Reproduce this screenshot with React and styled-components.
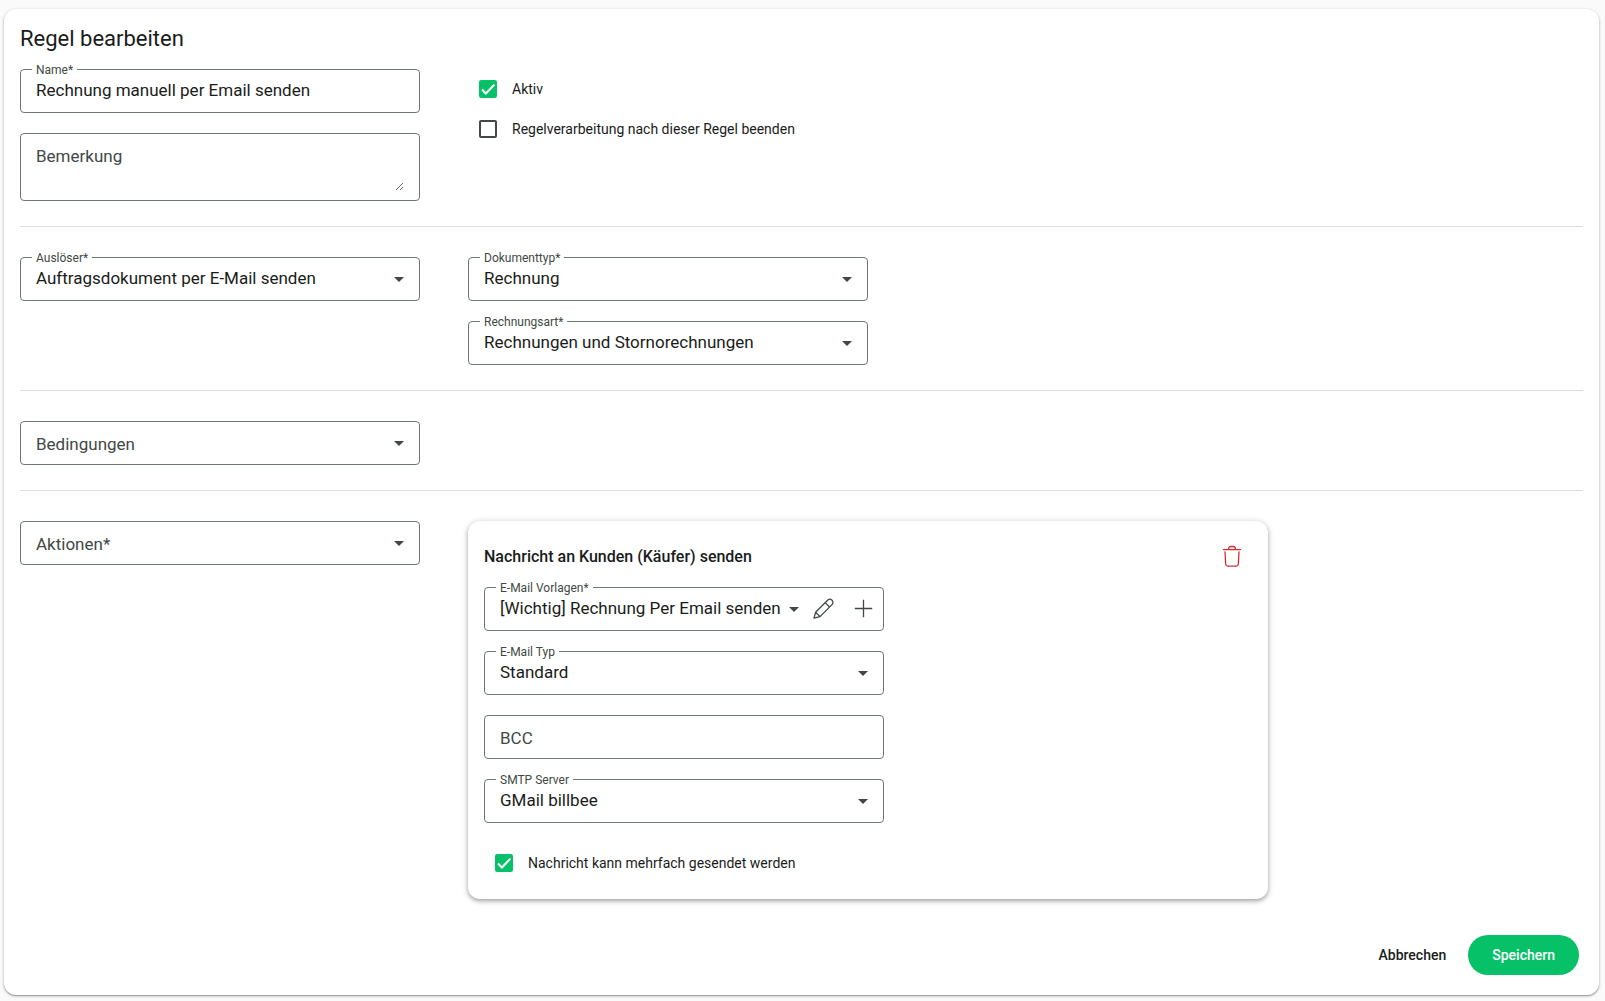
import React, { useState } from 'react';
import styled, { createGlobalStyle } from 'styled-components';

const App = () => {
    const [rule, setRule] = useState({
        name: 'Rechnung manuell per Email senden',
        note: '',
        active: true,
        stop: false,
        bcc: '',
        multiple: true,
    });
    const update = (key, value) => setRule({ ...rule, [key]: value });

    return (
        <>
            <GlobalStyle />
            <Page onSubmit={(e) => e.preventDefault()}>
                <Title>Regel bearbeiten</Title>
                <Section>
                    <Column>
                        <TextField id="name" label="Name*" value={rule.name} onChange={(v) => update('name', v)} />
                        <Field $tall>
                            <Label htmlFor="note" $floating={rule.note !== ''}>Bemerkung</Label>
                            <TextArea id="note" value={rule.note} onChange={(e) => update('note', e.target.value)} />
                        </Field>
                    </Column>
                    <div>
                        <CheckField label="Aktiv" checked={rule.active} onChange={(v) => update('active', v)} />
                        <CheckField
                            label="Regelverarbeitung nach dieser Regel beenden"
                            checked={rule.stop}
                            onChange={(v) => update('stop', v)}
                        />
                    </div>
                </Section>
                <Divider />
                <Section>
                    <SelectField id="trigger" label="Auslöser*" value="Auftragsdokument per E-Mail senden" />
                    <Column>
                        <SelectField id="doctype" label="Dokumenttyp*" value="Rechnung" />
                        <SelectField id="invoicetype" label="Rechnungsart*" value="Rechnungen und Stornorechnungen" />
                    </Column>
                </Section>
                <Divider />
                <Section>
                    <SelectField id="conditions" label="Bedingungen" />
                </Section>
                <Divider />
                <Section>
                    <SelectField id="actions" label="Aktionen*" />
                    <ActionCard>
                        <ActionHeader>
                            <ActionTitle>Nachricht an Kunden (Käufer) senden</ActionTitle>
                            <IconButton type="button" aria-label="Aktion löschen" $danger>
                                <TrashIcon />
                            </IconButton>
                        </ActionHeader>
                        <Column>
                            <SelectField id="template" label="E-Mail Vorlagen*" value="[Wichtig] Rechnung Per Email senden">
                                <IconButton type="button" aria-label="Vorlage bearbeiten">
                                    <PencilIcon />
                                </IconButton>
                                <IconButton type="button" aria-label="Vorlage hinzufügen">
                                    <PlusIcon />
                                </IconButton>
                            </SelectField>
                            <SelectField id="mailtype" label="E-Mail Typ" value="Standard" />
                            <TextField id="bcc" label="BCC" value={rule.bcc} onChange={(v) => update('bcc', v)} />
                            <SelectField id="smtp" label="SMTP Server" value="GMail billbee" />
                            <CheckField
                                label="Nachricht kann mehrfach gesendet werden"
                                checked={rule.multiple}
                                onChange={(v) => update('multiple', v)}
                            />
                        </Column>
                    </ActionCard>
                </Section>
                <Footer>
                    <Button type="button">Abbrechen</Button>
                    <Button type="submit" $primary>Speichern</Button>
                </Footer>
            </Page>
        </>
    );
};

const TextField = ({ id, label, value, onChange }) => (
    <Field>
        <Label htmlFor={id} $floating={value !== ''}>{label}</Label>
        <Input id={id} type="text" value={value} onChange={(e) => onChange(e.target.value)} />
    </Field>
);

const SelectField = ({ id, label, value = '', children }) => (
    <Field $actions={Boolean(children)}>
        <Label htmlFor={id} $floating={value !== ''}>{label}</Label>
        <Select id={id} defaultValue={value}>
            <option value={value}>{value}</option>
        </Select>
        <Arrow viewBox="0 0 10 5" aria-hidden="true" $actions={Boolean(children)}>
            <path d="M0 0h10L5 5z" />
        </Arrow>
        {children}
    </Field>
);

const CheckField = ({ label, checked, onChange }) => (
    <CheckLabel>
        <CheckMark>
            <Checkbox type="checkbox" checked={checked} onChange={(e) => onChange(e.target.checked)} />
            {checked && (
                <svg viewBox="0 0 24 24" width="18" height="18" aria-hidden="true">
                    <path d="M4 12.7 9.2 18 20.5 6.2" fill="none" stroke="#fff" strokeWidth="2.7" />
                </svg>
            )}
        </CheckMark>
        {label}
    </CheckLabel>
);

const TrashIcon = () => (
    <svg viewBox="0 1 20 22" width="20" height="22" fill="none" stroke="currentColor" strokeWidth="1.3" strokeLinecap="round">
        <path d="M1.5 4.7h17M6.5 4.5c0-2 1-3 2.4-3h2.2c1.4 0 2.4 1 2.4 3" />
        <path d="M3 7l.7 12.3c.1 1.2.8 1.9 1.9 1.9h8.8c1.1 0 1.8-.7 1.9-1.9L17 7" />
    </svg>
);

const PencilIcon = () => (
    <svg viewBox="0 0 22 22" width="22" height="22" fill="none" stroke="currentColor" strokeWidth="1.3" strokeLinejoin="round">
        <path d="M2 20.2 3.6 14.2 15.6 2.2a3.1 3.1 0 0 1 4.4 4.4L8 18.6z" />
        <path d="M13.2 4.6l4.4 4.4M3.6 14.2l4.4 4.4" />
    </svg>
);

const PlusIcon = () => (
    <svg viewBox="0 0 20 20" width="20" height="20" fill="none" stroke="currentColor" strokeWidth="1.3">
        <path d="M10.5.8v17.4M1.8 9.5h17.4" />
    </svg>
);

const GlobalStyle = createGlobalStyle`
    * {
        box-sizing: border-box;
    }
    body {
        margin: 0;
        background: #fafafa;
        color: #191c1a;
        font-family: Roboto, "Liberation Sans", sans-serif;
    }
    input, select, textarea, button {
        font-family: inherit;
    }
`;
const Page = styled.form`
    margin: 9px 6px 6px 4px;
    padding: 16px 16px 20px;
    background: #fff;
    border-radius: 12px;
    box-shadow: 0 1px 3px rgba(0, 0, 0, 0.3), 0 1px 1px rgba(0, 0, 0, 0.2);
`;
const Title = styled.h1`
    margin: 0 0 16px;
    font-size: 22px;
    line-height: 28px;
    font-weight: 400;
`;
const Section = styled.div`
    display: grid;
    grid-template-columns: 400px 1fr;
    column-gap: 48px;
    align-items: start;
`;
const Column = styled.div`
    display: flex;
    flex-direction: column;
    gap: 20px;
`;
const Divider = styled.hr`
    margin: 25px 0 30px;
    border: 0;
    border-top: 1px solid #dedede;
`;
const Field = styled.div`
    position: relative;
    display: flex;
    align-items: center;
    width: 100%;
    max-width: 400px;
    height: ${({ $tall }) => ($tall ? 68 : 44)}px;
    padding: ${({ $actions }) => ($actions ? '0 0 0 15px' : '0 15px')};
    border: 1px solid #6f7973;
    border-radius: 4px;
`;
const Label = styled.label`
    position: absolute;
    left: 11px;
    top: ${({ $floating }) => ($floating ? -8 : 10)}px;
    padding: 0 4px;
    background: #fff;
    color: #404943;
    font-size: ${({ $floating }) => ($floating ? 12 : 17)}px;
    line-height: ${({ $floating }) => ($floating ? 16 : 24)}px;
    pointer-events: none;
`;
const Input = styled.input`
    flex: 1;
    min-width: 0;
    height: 24px;
    padding: 0 0 2px;
    border: 0;
    outline: 0;
    background: transparent;
    color: inherit;
    font-size: 17px;
    line-height: 22px;
`;
const TextArea = styled(Input).attrs({ as: 'textarea' })`
    height: 48px;
    resize: vertical;
`;
const Select = styled(Input).attrs({ as: 'select' })`
    appearance: none;
`;
const Arrow = styled.svg`
    flex: none;
    width: 10px;
    height: 5px;
    margin-right: ${({ $actions }) => ($actions ? 4 : 0)}px;
    fill: #404943;
`;
const CheckLabel = styled.label`
    display: flex;
    align-items: center;
    gap: 15px;
    height: 40px;
    padding-left: 11px;
    font-size: 14px;
    line-height: 20px;
`;
const CheckMark = styled.span`
    display: grid;
    > * {
        grid-area: 1 / 1;
    }
    svg {
        pointer-events: none;
    }
`;
const Checkbox = styled.input`
    appearance: none;
    width: 18px;
    height: 18px;
    margin: 0;
    border: 2px solid #404943;
    border-radius: 2px;
    &:checked {
        border-color: #07c169;
        background: #07c169;
    }
`;
const ActionCard = styled.section`
    width: 100%;
    max-width: 800px;
    padding: 16px;
    border-radius: 12px;
    box-shadow: 0 2px 4px rgba(0, 0, 0, 0.3), 0 1px 8px rgba(0, 0, 0, 0.12);
`;
const ActionHeader = styled.div`
    display: flex;
    align-items: center;
    justify-content: space-between;
    margin-bottom: 10px;
`;
const ActionTitle = styled.h2`
    margin: 0;
    font-size: 16px;
    line-height: 24px;
    font-weight: 500;
`;
const IconButton = styled.button`
    display: flex;
    flex: none;
    align-items: center;
    justify-content: center;
    width: 40px;
    height: 40px;
    padding: 0;
    border: 0;
    background: none;
    color: ${({ $danger }) => ($danger ? '#d32f2f' : '#404943')};
    svg {
        overflow: visible;
    }
`;
const Footer = styled.div`
    display: flex;
    justify-content: flex-end;
    gap: 10px;
    margin-top: 36px;
    padding-right: 4px;
`;
const Button = styled.button`
    height: 40px;
    padding: 0 ${({ $primary }) => ($primary ? 24 : 12)}px;
    border: 0;
    border-radius: 20px;
    background: ${({ $primary }) => ($primary ? '#07c169' : 'transparent')};
    color: ${({ $primary }) => ($primary ? '#fff' : 'inherit')};
    font-size: 14px;
    line-height: 20px;
    font-weight: 500;
`;
export default App;
